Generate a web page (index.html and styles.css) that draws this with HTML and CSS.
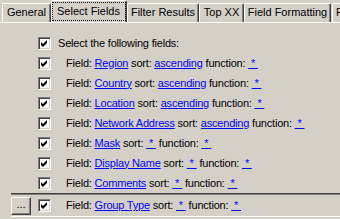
FILE: index.html
```html
<!DOCTYPE html>
<html lang="en">

<head>
    <meta charset="UTF-8">
    <title>Select Fields</title>
    <link rel="stylesheet" href="styles.css">
</head>

<body>

    <div class="tabs">
        <div class="tab tab-general">General</div>
        <div class="tab tab-select active"><span class="label">Select Fields</span></div>
        <div class="tab tab-filter">Filter Results</div>
        <div class="tab tab-top">Top XX</div>
        <div class="tab tab-format">Field Formatting</div>
        <div class="tab tab-more">F</div>
    </div>

    <div class="panel">
        <div class="row">
            <span class="check"><svg width="9" height="9" viewBox="0 0 9 9"><polygon points="1,3 3,5 7,1 7,4 3,8 1,6" fill="#000"/></svg></span>
            <span class="text head">Select the following fields:</span>
        </div>

        <div class="row">
            <span class="check"><svg width="9" height="9" viewBox="0 0 9 9"><polygon points="1,3 3,5 7,1 7,4 3,8 1,6" fill="#000"/></svg></span>
            <span class="text">Field: <a href="#">Region</a> sort: <a href="#">ascending</a> function: <a href="#">&nbsp;*&nbsp;</a></span>
        </div>

        <div class="row">
            <span class="check"><svg width="9" height="9" viewBox="0 0 9 9"><polygon points="1,3 3,5 7,1 7,4 3,8 1,6" fill="#000"/></svg></span>
            <span class="text">Field: <a href="#">Country</a> sort: <a href="#">ascending</a> function: <a href="#">&nbsp;*&nbsp;</a></span>
        </div>

        <div class="row">
            <span class="check"><svg width="9" height="9" viewBox="0 0 9 9"><polygon points="1,3 3,5 7,1 7,4 3,8 1,6" fill="#000"/></svg></span>
            <span class="text">Field: <a href="#">Location</a> sort: <a href="#">ascending</a> function: <a href="#">&nbsp;*&nbsp;</a></span>
        </div>

        <div class="row">
            <span class="check"><svg width="9" height="9" viewBox="0 0 9 9"><polygon points="1,3 3,5 7,1 7,4 3,8 1,6" fill="#000"/></svg></span>
            <span class="text">Field: <a href="#">Network Address</a> sort: <a href="#">ascending</a> function: <a href="#">&nbsp;*&nbsp;</a></span>
        </div>

        <div class="row">
            <span class="check"><svg width="9" height="9" viewBox="0 0 9 9"><polygon points="1,3 3,5 7,1 7,4 3,8 1,6" fill="#000"/></svg></span>
            <span class="text">Field: <a href="#">Mask</a> sort: <a href="#">&nbsp;*&nbsp;</a> function: <a href="#">&nbsp;*&nbsp;</a></span>
        </div>

        <div class="row">
            <span class="check"><svg width="9" height="9" viewBox="0 0 9 9"><polygon points="1,3 3,5 7,1 7,4 3,8 1,6" fill="#000"/></svg></span>
            <span class="text">Field: <a href="#">Display Name</a> sort: <a href="#">&nbsp;*&nbsp;</a> function: <a href="#">&nbsp;*&nbsp;</a></span>
        </div>

        <div class="row">
            <span class="check"><svg width="9" height="9" viewBox="0 0 9 9"><polygon points="1,3 3,5 7,1 7,4 3,8 1,6" fill="#000"/></svg></span>
            <span class="text">Field: <a href="#">Comments</a> sort: <a href="#">&nbsp;*&nbsp;</a> function: <a href="#">&nbsp;*&nbsp;</a></span>
        </div>

        <div class="row current">
            <button class="more-button">...</button>
            <span class="check"><svg width="9" height="9" viewBox="0 0 9 9"><polygon points="1,3 3,5 7,1 7,4 3,8 1,6" fill="#000"/></svg></span>
            <span class="text">Field: <a href="#">Group Type</a> sort: <a href="#">&nbsp;*&nbsp;</a> function: <a href="#">&nbsp;*&nbsp;</a></span>
        </div>
    </div>

</body>

</html>
```

FILE: styles.css
```css
body {
    font-family: 'Liberation Sans', Arial, sans-serif;
    font-size: 11px;
    margin: 0;
    padding: 0;
    background-color: #d4d0c8;
    color: #000;
    overflow: hidden;
    width: 340px;
    height: 219px;
}

.tabs {
    display: flex;
    align-items: flex-end;
    height: 22px;
    padding-left: 2px;
    border-bottom: 1px solid #fff;
    white-space: nowrap;
    overflow: hidden;
}

.tab {
    box-sizing: border-box;
    flex-shrink: 0;
    height: 19px;
    line-height: 16px;
    text-align: center;
    border-top: 1px solid #fff;
    border-left: 1px solid #fff;
    border-right: 1px solid #404040;
    box-shadow: inset -1px 0 #808080;
    border-radius: 2px 2px 0 0;
    background-color: #d4d0c8;
}

.tab.active {
    position: relative;
    height: 23px;
    margin-bottom: -1px;
    padding-top: 1px;
    line-height: 13px;
}

.tab.active .label {
    display: inline-block;
    border: 1px dotted #000;
    padding: 2px 5px 2px 4px;
}

.tab-general { width: 49px; }
.tab-select { width: 76px; }
.tab-filter { width: 72px; }
.tab-top { width: 45px; }
.tab-format { width: 87px; }
.tab-more { width: 24px; margin-left: 1px; text-align: left; padding-left: 3px; }

.panel {
    padding-top: 10px;
}

.row {
    display: flex;
    align-items: center;
    height: 20px;
    padding-left: 38px;
    white-space: nowrap;
}

.check {
    box-sizing: border-box;
    flex-shrink: 0;
    width: 13px;
    height: 13px;
    background-color: #fff;
    border-top: 1px solid #808080;
    border-left: 1px solid #808080;
    border-right: 1px solid #fff;
    border-bottom: 1px solid #fff;
    box-shadow: inset 1px 1px #404040, inset -1px -1px #d4d0c8;
    display: flex;
    align-items: center;
    justify-content: center;
}

.check svg {
    display: block;
}

.text {
    margin-left: 15px;
    line-height: 13px;
    letter-spacing: -0.2px;
}

.text.head {
    margin-left: 7px;
}

.text a {
    color: #0000ff;
    text-decoration: underline;
}

.row.current {
    height: 21px;
    margin-left: 11px;
    padding-left: 0;
    border-top: 1px solid #404040;
    box-shadow: inset 0 1px #808080;
    border-bottom: 1px solid #fff;
    padding-top: 1px;
}

.more-button {
    box-sizing: border-box;
    width: 20px;
    height: 18px;
    margin: 0 7px 0 0;
    padding: 0 0 3px 0;
    font-family: 'Liberation Sans', Arial, sans-serif;
    font-size: 11px;
    line-height: 11px;
    color: #000;
    background-color: #d4d0c8;
    border-top: 1px solid #fff;
    border-left: 1px solid #fff;
    border-right: 1px solid #404040;
    border-bottom: 1px solid #404040;
    box-shadow: inset -1px -1px #808080;
}
```
